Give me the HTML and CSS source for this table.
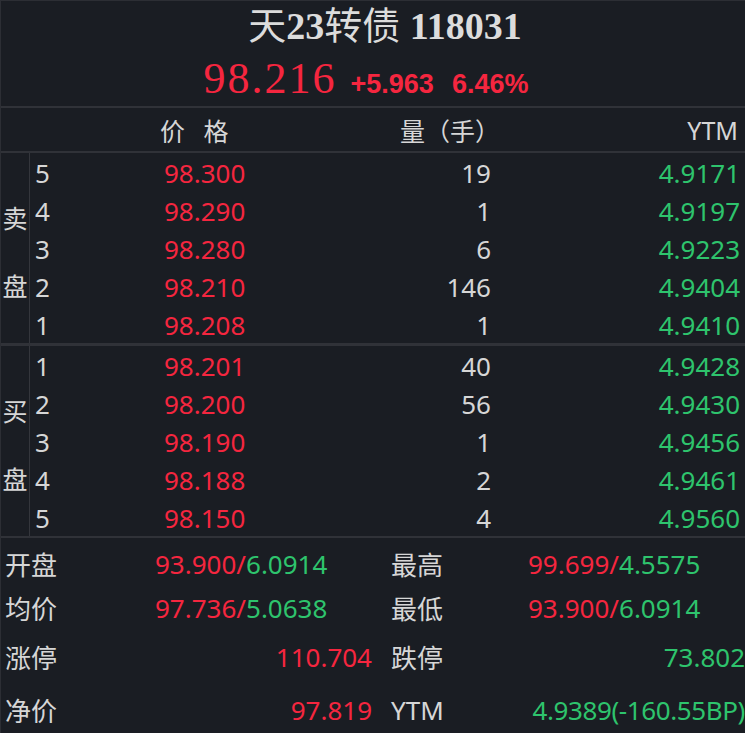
FILE: index.html
```html
<!DOCTYPE html>
<html lang="zh-CN">
<head>
    <meta charset="UTF-8">
    <meta name="viewport" content="width=device-width, initial-scale=1.0">
    <title>天23转债 118031 五档盘口</title>
    <link rel="stylesheet" href="styles.css">
</head>
<body>

    <div class="quote">
        <header class="quote-head">
            <h1 class="bond-name">天<span class="code">23</span>转债 <span class="code">118031</span></h1>
            <div class="last-line">
                <span class="last-price">98.216</span>
                <span class="change">+5.963</span>
                <span class="change pct">6.46%</span>
            </div>
        </header>

        <div class="book-head">
            <span class="head-price">价 格</span>
            <span class="head-vol">量（手）</span>
            <span class="head-ytm">YTM</span>
        </div>

        <section class="book-side">
            <div class="side-label"><span>卖</span><span>盘</span></div>
            <div class="levels">
                <div class="level-row"><span class="lv">5</span><span class="px">98.300</span><span class="vol">19</span><span class="ytm">4.9171</span></div>
                <div class="level-row"><span class="lv">4</span><span class="px">98.290</span><span class="vol">1</span><span class="ytm">4.9197</span></div>
                <div class="level-row"><span class="lv">3</span><span class="px">98.280</span><span class="vol">6</span><span class="ytm">4.9223</span></div>
                <div class="level-row"><span class="lv">2</span><span class="px">98.210</span><span class="vol">146</span><span class="ytm">4.9404</span></div>
                <div class="level-row"><span class="lv">1</span><span class="px">98.208</span><span class="vol">1</span><span class="ytm">4.9410</span></div>
            </div>
        </section>

        <section class="book-side buy">
            <div class="side-label"><span>买</span><span>盘</span></div>
            <div class="levels">
                <div class="level-row"><span class="lv">1</span><span class="px">98.201</span><span class="vol">40</span><span class="ytm">4.9428</span></div>
                <div class="level-row"><span class="lv">2</span><span class="px">98.200</span><span class="vol">56</span><span class="ytm">4.9430</span></div>
                <div class="level-row"><span class="lv">3</span><span class="px">98.190</span><span class="vol">1</span><span class="ytm">4.9456</span></div>
                <div class="level-row"><span class="lv">4</span><span class="px">98.188</span><span class="vol">2</span><span class="ytm">4.9461</span></div>
                <div class="level-row"><span class="lv">5</span><span class="px">98.150</span><span class="vol">4</span><span class="ytm">4.9560</span></div>
            </div>
        </section>

        <section class="stats">
            <div class="stat-row">
                <span class="stat-label">开盘</span>
                <span class="stat-value"><span class="up">93.900/</span><span class="down">6.0914</span></span>
                <span class="stat-label right">最高</span>
                <span class="stat-value"><span class="up">99.699/</span><span class="down">4.5575</span></span>
            </div>
            <div class="stat-row">
                <span class="stat-label">均价</span>
                <span class="stat-value"><span class="up">97.736/</span><span class="down">5.0638</span></span>
                <span class="stat-label right">最低</span>
                <span class="stat-value"><span class="up">93.900/</span><span class="down">6.0914</span></span>
            </div>
            <div class="stat-row tall">
                <span class="stat-label">涨停</span>
                <span class="stat-value end up">110.704</span>
                <span class="stat-label right">跌停</span>
                <span class="stat-value end down">73.802</span>
            </div>
            <div class="stat-row last">
                <span class="stat-label">净价</span>
                <span class="stat-value end up">97.819</span>
                <span class="stat-label right">YTM</span>
                <span class="stat-value end down tight">4.9389(-160.55BP)</span>
            </div>
        </section>
    </div>

</body>
</html>
```

FILE: styles.css
```css
body {
    margin: 0;
    background-color: #1a1d23;
    font-family: "Noto Sans", "Noto Sans CJK SC", sans-serif;
    color: #d6d6d6;
}

.quote {
    width: 745px;
    height: 733px;
    overflow: hidden;
    box-sizing: border-box;
    border-top: 1px solid #2c2e34;
    border-left: 1px solid #2c2e34;
}

/* title + last price */
.quote-head {
    height: 105px;
    border-bottom: 2px solid #303238;
    text-align: center;
}

.bond-name {
    margin: 0;
    padding-left: 24px;
    height: 50px;
    line-height: 50px;
    font-family: "Liberation Serif", "Noto Sans CJK SC", serif;
    font-size: 38px;
    font-weight: normal;
    color: #dcdcdc;
}

.bond-name .code {
    font-weight: bold;
}

.last-line {
    height: 55px;
    line-height: 56px;
    white-space: nowrap;
    padding-right: 14px;
}

.last-price {
    font-family: "Liberation Serif", serif;
    font-size: 44px;
    letter-spacing: 2px;
    color: #f5263f;
    margin-right: 10px;
}

.change {
    font-family: "Liberation Sans", sans-serif;
    font-weight: bold;
    font-size: 27px;
    color: #f5263f;
}

.change.pct {
    margin-left: 14px;
}

/* order book */
.book-head {
    display: grid;
    grid-template-columns: 159px 200px 140px 1fr;
    align-items: center;
    height: 43px;
    border-bottom: 2px solid #303238;
    font-size: 25px;
}

.head-price {
    grid-column: 2;
    word-spacing: 12px;
}

.head-vol {
    text-align: right;
}

.head-ytm {
    text-align: right;
    padding-right: 7px;
}

.book-side {
    display: flex;
    height: 190px;
    border-bottom: 3px solid #303238;
}

.book-side.buy {
    border-bottom-width: 2px;
}

.side-label {
    width: 29px;
    border-right: 1px solid #34363c;
    display: flex;
    flex-direction: column;
    justify-content: center;
    align-items: center;
    gap: 34px;
    padding-top: 8px;
    box-sizing: border-box;
    font-size: 25px;
    line-height: 34px;
}

.levels {
    flex: 1;
}

.level-row {
    display: grid;
    grid-template-columns: 134px 200px 127px 1fr;
    align-items: center;
    height: 38px;
    padding-top: 1px;
    box-sizing: border-box;
    font-size: 26px;
}

.lv {
    padding-left: 5px;
    color: #d6d6d6;
}

.px {
    color: #f5263f;
}

.vol {
    text-align: right;
}

.ytm {
    text-align: right;
    padding-right: 5px;
    color: #2ec46d;
}

/* day stats */
.stats {
    padding-top: 4px;
}

.stat-row {
    display: grid;
    grid-template-columns: 154px 217px 156px 1fr;
    align-items: center;
    height: 44px;
    font-size: 26px;
    white-space: nowrap;
}

.stat-row.tall {
    height: 54px;
}

.stat-row.last {
    height: 52px;
}

.stat-label {
    padding-left: 4px;
}

.stat-label.right {
    padding-left: 19px;
}

.stat-value.end {
    text-align: right;
}

.stat-value.tight {
    letter-spacing: -0.4px;
}

.up {
    color: #f5263f;
}

.down {
    color: #2ec46d;
}
```
